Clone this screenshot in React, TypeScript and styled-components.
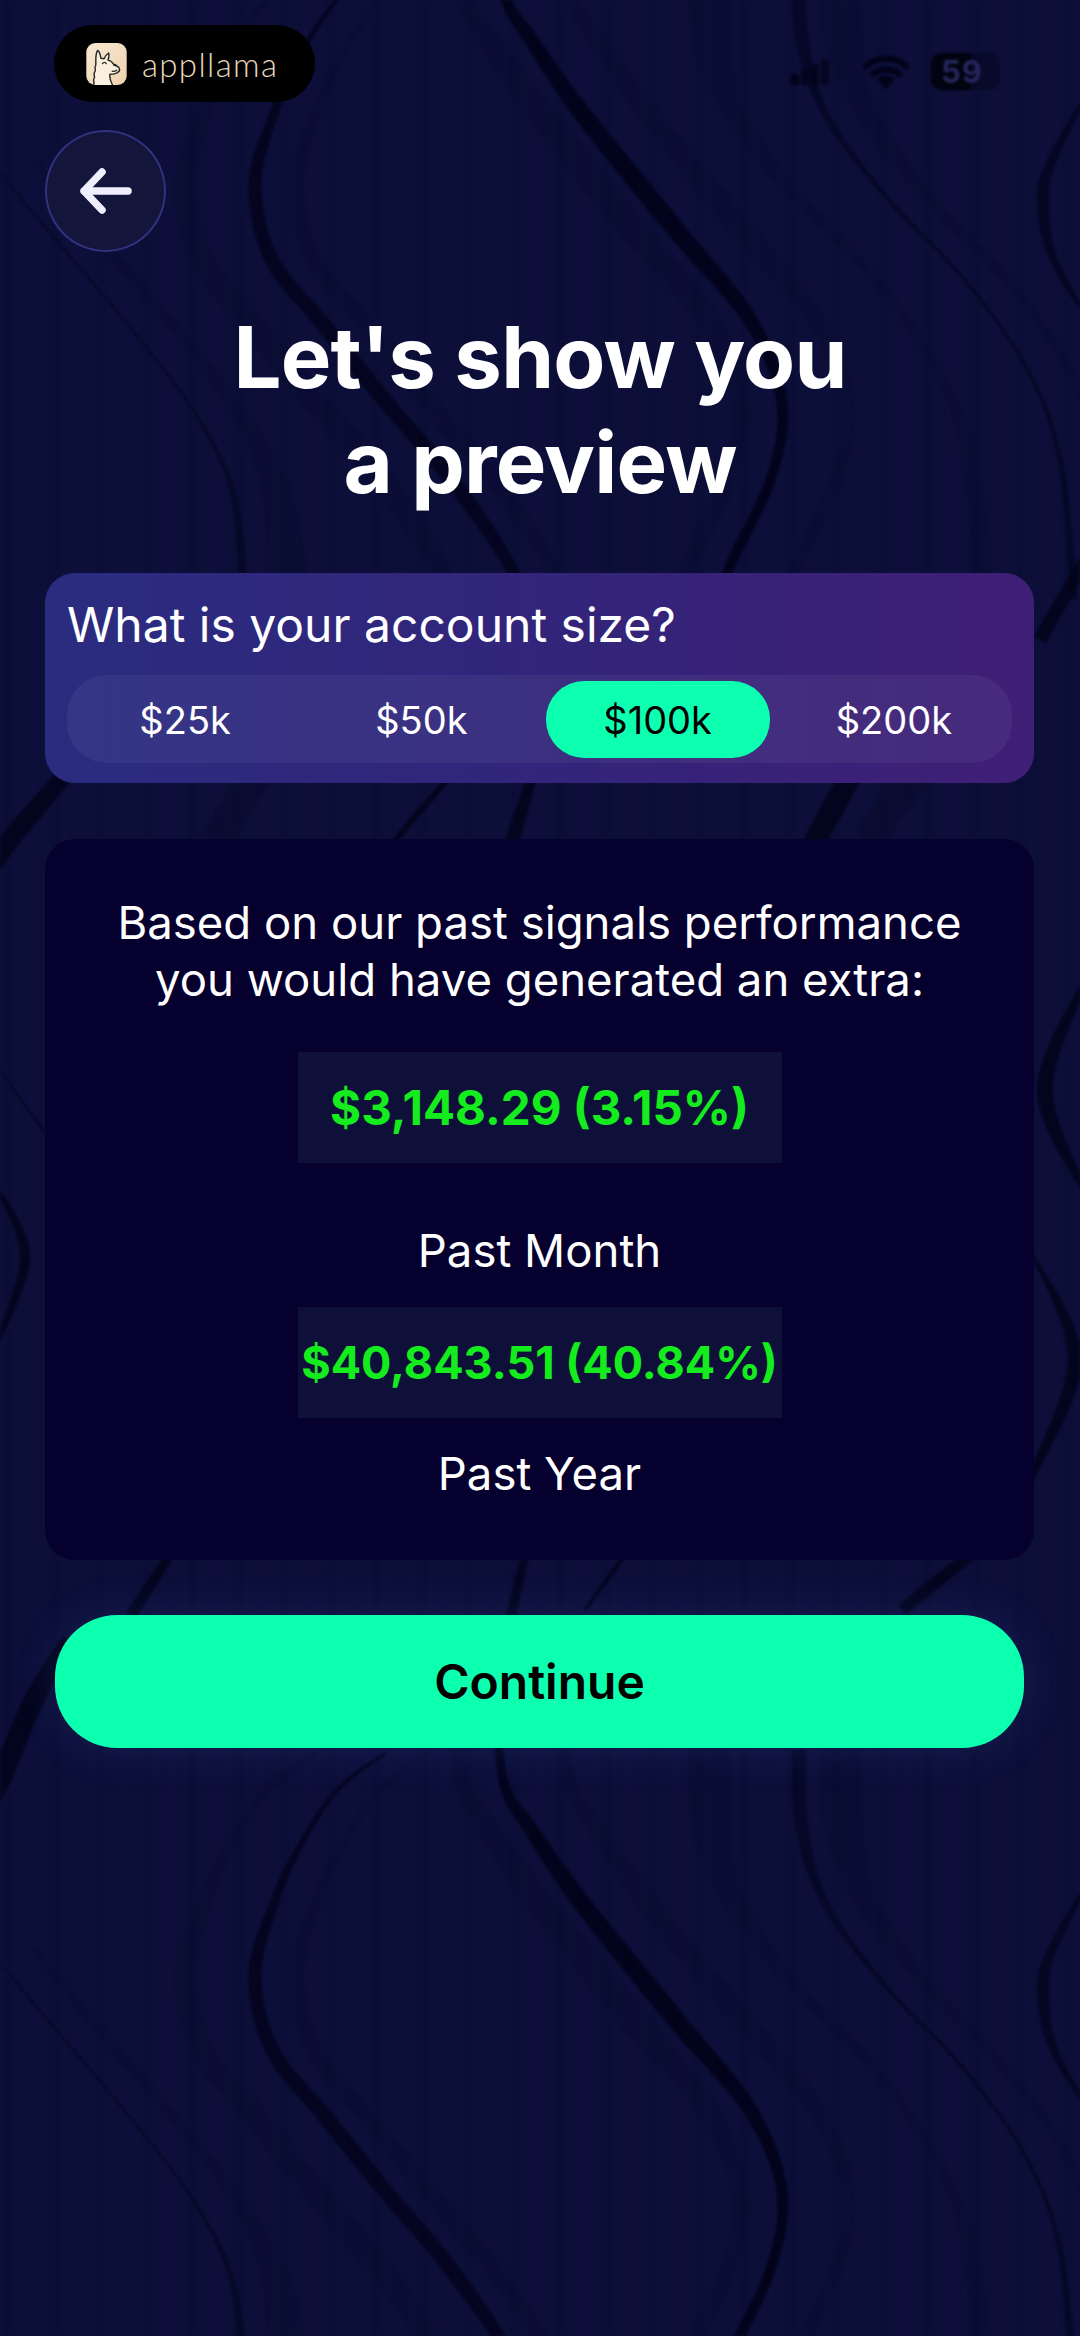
import React, { useState } from 'react';
import styled, { createGlobalStyle } from 'styled-components';

const GlobalStyle = createGlobalStyle`
  html, body {
    margin: 0;
    padding: 0;
    background: #0c0f38;
  }
  * {
    box-sizing: border-box;
  }
`;

const Page = styled.div`
  position: relative;
  width: 1080px;
  height: 2336px;
  overflow: hidden;
  font-family: Inter, 'Liberation Sans', sans-serif;
  color: #fff;
  background-color: #0c0f38;
`;

const Backdrop = styled.svg`
  position: absolute;
  inset: 0;
  width: 1080px;
  height: 2336px;
  filter: blur(1px);
`;

const Content = styled.main`
  position: relative;
  display: flex;
  flex-direction: column;
`;

const StatusBar = styled.header`
  display: flex;
  align-items: flex-start;
  justify-content: space-between;
  height: 77px;
  margin-top: 25px;
  padding: 0 80px 0 54px;
`;

const LogoPill = styled.div`
  display: flex;
  align-items: center;
  gap: 15px;
  width: 261px;
  height: 77px;
  padding: 0 0 0 32px;
  border-radius: 39px;
  background: #000;
`;

const LogoIcon = styled.svg`
  width: 41px;
  height: 42px;
`;

const LogoText = styled.span`
  font-family: Lato, sans-serif;
  font-size: 33px;
  font-weight: 300;
  letter-spacing: 1.35px;
  color: #e9d8bf;
`;

const StatusIcons = styled.div`
  display: flex;
  align-items: center;
  gap: 34px;
  height: 37px;
  margin-top: 28px;
  filter: blur(0.8px);
`;

const Battery = styled.div`
  width: 69px;
  height: 37px;
  margin-left: -12px;
  padding-left: 10px;
  border-radius: 11px;
  overflow: hidden;
  background: linear-gradient(90deg, #020310 0 58%, rgba(3, 4, 22, 0.4) 58% 100%);
  font-size: 31px;
  font-weight: 700;
  line-height: 37px;
  letter-spacing: 1px;
  color: #23265a;
`;

const BackButton = styled.button`
  display: flex;
  align-items: center;
  justify-content: center;
  width: 121px;
  height: 122px;
  margin: 28px 0 0 45px;
  padding: 0;
  border: 2px solid #30327f;
  border-radius: 50%;
  background: #14153a;
`;

const Title = styled.h1`
  margin: 53px 0 0;
  font-size: 85px;
  font-weight: 700;
  line-height: 105px;
  text-align: center;
  letter-spacing: -0.8px;
`;

const SizeCard = styled.section`
  height: 210px;
  margin: 58px 46px 0 45px;
  padding: 22px 22px 0 22px;
  border-radius: 30px;
  background: linear-gradient(90deg, #2a2c80 0%, #33247a 55%, #3f1f75 100%);
`;

const SizeLabel = styled.div`
  font-size: 48px;
  font-weight: 400;
  line-height: 60px;
`;

const SizeTrack = styled.div`
  display: grid;
  grid-template-columns: repeat(4, 1fr);
  height: 88px;
  margin-top: 20px;
  padding: 6px 0 5px;
  border-radius: 40px;
  background: rgba(255, 255, 255, 0.05);
`;

const SizeOption = styled.button<{ $active: boolean }>`
  margin: 0 6px;
  padding: 0;
  border: 0;
  border-radius: 38px;
  font-family: inherit;
  font-size: 38px;
  font-weight: 400;
  color: ${({ $active }) => ($active ? '#000' : '#fff')};
  background: ${({ $active }) => ($active ? '#0dffb0' : 'transparent')};
`;

const ResultCard = styled.section`
  display: flex;
  flex-direction: column;
  align-items: center;
  height: 721px;
  margin: 56px 46px 0 45px;
  padding-top: 55px;
  border-radius: 30px;
  background: #05002e;
`;

const Intro = styled.p`
  margin: 0;
  font-size: 45.5px;
  font-weight: 400;
  line-height: 57px;
  text-align: center;
`;

const ValueBox = styled.div<{ $top: number; $size: number }>`
  display: flex;
  align-items: center;
  justify-content: center;
  width: 484px;
  height: 111px;
  margin-top: ${({ $top }) => $top}px;
  background: #0f1039;
  font-size: ${({ $size }) => $size}px;
  font-weight: 700;
  white-space: nowrap;
  color: #14ec1e;
`;

const PeriodLabel = styled.div`
  font-size: 45.5px;
  font-weight: 400;
  line-height: 56px;
`;

const MonthLabel = styled(PeriodLabel)`
  margin-top: 60px;
`;

const YearLabel = styled(PeriodLabel)`
  margin-top: 28px;
`;

const ContinueButton = styled.button`
  width: 969px;
  height: 133px;
  margin: 55px 0 0 55px;
  padding: 0;
  border: 0;
  border-radius: 62px;
  background: #0dffb0;
  box-shadow: 0 0 46px rgba(90, 130, 255, 0.14);
  font-family: inherit;
  font-size: 48px;
  font-weight: 600;
  color: #000;
`;

type Pt = [number, number, number];

// closed outline around a centre line, width varies per point
const ribbon = (pts: Pt[]): string => {
  const side = (sign: number) =>
    pts.map(([x, y, w], i) => {
      const [ax, ay] = pts[Math.max(i - 1, 0)];
      const [bx, by] = pts[Math.min(i + 1, pts.length - 1)];
      const len = Math.hypot(bx - ax, by - ay) || 1;
      return [x + (sign * w * (by - ay)) / len / 2, y - (sign * w * (bx - ax)) / len / 2];
    });
  const curve = (p: number[][]) =>
    p
      .slice(1)
      .map((c, i) => {
        const p0 = p[Math.max(i - 1, 0)];
        const p1 = p[i];
        const p3 = p[Math.min(i + 2, p.length - 1)];
        return `C${p1[0] + (c[0] - p0[0]) / 6} ${p1[1] + (c[1] - p0[1]) / 6} ${c[0] - (p3[0] - p1[0]) / 6} ${c[1] - (p3[1] - p1[1]) / 6} ${c[0]} ${c[1]}`;
      })
      .join('');
  const left = side(1);
  const right = side(-1).reverse();
  return `M${left[0][0]} ${left[0][1]}${curve(left)}L${right[0][0]} ${right[0][1]}${curve(right)}Z`;
};

const shift = (pts: Pt[], dx: number, scale: number): Pt[] =>
  pts.map(([x, y, w]) => [x + dx, y, w * scale]);

const waveA: Pt[] = [[498, -50, 8], [506, 0, 10], [530, 38, 14], [572, 100, 17], [620, 161, 18], [682, 237, 18], [751, 321, 14], [782, 402, 11], [771, 478, 10], [730, 566, 10], [700, 640, 6]];
const waveB: Pt[] = [[386, -37, 3], [337, 0, 4], [300, 56, 6], [275, 111, 9], [255, 184, 13], [272, 260, 14], [324, 325, 15], [386, 402, 15], [447, 474, 15], [510, 566, 12], [535, 640, 8]];
const waveC: Pt[] = [[799, -40, 14], [802, 38, 13], [826, 115, 7], [888, 199, 4], [964, 279, 3], [1026, 367, 3], [1060, 459, 5], [1074, 600, 8]];
const waveD: Pt[] = [[-10, 160, 1], [41, 222, 2], [138, 337, 2], [200, 421, 3], [234, 497, 6], [244, 600, 9]];
const waveE: Pt[] = [[1095, 80, 2], [1052, 160, 9], [1043, 202, 12], [1054, 260, 8], [1095, 330, 2]];

// repeats down the page every 1790px
const tiled = [
  { d: ribbon(waveA), opacity: 0.95 },
  { d: ribbon(waveB), opacity: 0.8 },
  { d: ribbon(waveC), opacity: 0.6 },
  { d: ribbon(waveD), opacity: 0.55 },
  { d: ribbon(waveE), opacity: 0.7 },
];
const tiledFaint = [
  shift(waveA, -42, 1.5),
  shift(waveA, 66, 1.2),
  shift(waveB, 42, 1.1),
  shift(waveB, -70, 1.6),
  shift(waveC, 42, 3),
  shift(waveC, -90, 3),
  shift(waveD, 44, 5),
].map(ribbon);

// only show once, in the gaps between the cards
const once: Pt[][] = [
  [[70, 770, 15], [60, 781, 17], [10, 840, 19], [-14, 880, 14]],
  [[452, 770, 4], [444, 783, 6], [396, 840, 6], [370, 880, 3]],
  [[533, 770, 9], [530, 783, 10], [513, 840, 14], [505, 880, 10]],
  [[855, 770, 18], [847, 783, 22], [816, 840, 22], [800, 880, 16]],
  [[0, 1070, 1], [43, 1130, 2], [60, 1150, 1]],
  [[-8, 1180, 4], [25, 1256, 10], [-8, 1355, 4]],
  [[1088, 975, 6], [1045, 1090, 16], [1088, 1197, 6]],
  [[1030, 1250, 2], [1075, 1359, 14], [1030, 1480, 8]],
  [[170, 1555, 9], [131, 1615, 12]],
  [[625, 1555, 4], [585, 1610, 4]],
  [[525, 1555, 8], [510, 1620, 10]],
  [[970, 1555, 12], [902, 1610, 12]],
  [[70, 1640, 16], [34, 1700, 20], [0, 1781, 20], [-14, 1812, 12]],
  [[1085, 560, 12], [1040, 640, 14]],
];
const onceFaint: Pt[][] = [
  [[925, 770, 28], [909, 783, 30], [868, 840, 30]],
  [[260, 770, 30], [215, 840, 30]],
];

const Waves: React.FC = () => (
  <Backdrop viewBox="0 0 1080 2336" aria-hidden="true">
    <defs>
      <pattern id="grain" width="46" height="40" patternUnits="userSpaceOnUse">
        <rect x="4" width="9" height="40" fill="#05062a" opacity="0.07" />
        <rect x="25" width="14" height="40" fill="#1a1050" opacity="0.08" />
      </pattern>
    </defs>
    <rect width="1080" height="2336" fill="url(#grain)" />
    {[0, 1790].map((y) => (
      <g key={y} transform={`translate(0 ${y})`}>
        {tiledFaint.map((d) => (
          <path key={d} d={d} fill="#03051f" opacity="0.16" />
        ))}
        {tiled.map(({ d, opacity }) => (
          <path key={d} d={d} fill="#02031a" opacity={opacity} />
        ))}
      </g>
    ))}
    {onceFaint.map((pts) => (
      <path key={pts[0][1] + pts[0][0]} d={ribbon(pts)} fill="#03051f" opacity="0.25" />
    ))}
    {once.map((pts) => (
      <path key={pts[0][1] + pts[0][0]} d={ribbon(pts)} fill="#02031a" opacity="0.85" />
    ))}
  </Backdrop>
);

const Llama: React.FC = () => (
  <LogoIcon viewBox="0 0 125 130" aria-hidden="true">
    <defs>
      <linearGradient id="llamaBg" x1="0" y1="0" x2="1" y2="1">
        <stop offset="0" stopColor="#f8e8d2" />
        <stop offset="1" stopColor="#eed3b0" />
      </linearGradient>
    </defs>
    <rect width="125" height="130" rx="28" fill="url(#llamaBg)" />
    <path
      d="M22 130c6-8-3-12 2-20s-4-12 2-20-3-12 3-20c2-12-3-32 6-47 7 2 8 14 10 24l10 2c3-8 8-14 14-18 3 8 0 16-2 22 12 2 16 10 20 16 8 2 16 6 16 14s-14 14-30 14c-2 12 2 22 8 33"
      fill="#fbf0e0"
      stroke="#2b2a2a"
      strokeWidth="4.5"
      strokeLinecap="round"
      strokeLinejoin="round"
    />
    <path
      d="M50 64c3-5 9-5 12 0M84 68c3-2 6-2 8 0M94 84c-5 4-10 4-14 3"
      fill="none"
      stroke="#2b2a2a"
      strokeWidth="4"
      strokeLinecap="round"
    />
  </LogoIcon>
);

const SignalIcon: React.FC = () => (
  <svg width="38" height="26" viewBox="0 0 38 26" aria-hidden="true">
    <rect x="0" y="15" width="8" height="11" rx="2.5" fill="#02031a" />
    <rect x="10" y="10" width="8" height="16" rx="2.5" fill="#02031a" opacity="0.85" />
    <rect x="20" y="5" width="8" height="21" rx="2.5" fill="#02031a" opacity="0.8" />
    <rect x="30" y="0" width="8" height="26" rx="2.5" fill="#02031a" opacity="0.7" />
  </svg>
);

const WifiIcon: React.FC = () => (
  <svg width="46" height="34" viewBox="0 0 46 34" aria-hidden="true">
    <path
      d="M3 11c11-10 29-10 40 0M10 19c7-6 19-6 26 0"
      fill="none"
      stroke="#02031a"
      strokeWidth="6"
      strokeLinecap="round"
    />
    <path d="M14 24c5-4 13-4 18 0l-9 10z" fill="#02031a" />
  </svg>
);

const ArrowIcon: React.FC = () => (
  <svg width="60" height="52" viewBox="0 0 60 52" aria-hidden="true">
    <path
      d="M52 26H8M26 7L8 26l18 19"
      fill="none"
      stroke="#eeeeff"
      strokeWidth="7.5"
      strokeLinecap="round"
      strokeLinejoin="round"
    />
  </svg>
);

const sizes = ['$25k', '$50k', '$100k', '$200k'];

const App: React.FC = () => {
  const [size, setSize] = useState('$100k');

  return (
    <Page>
      <GlobalStyle />
      <Waves />
      <Content>
        <StatusBar>
          <LogoPill>
            <Llama />
            <LogoText>appllama</LogoText>
          </LogoPill>
          <StatusIcons>
            <SignalIcon />
            <WifiIcon />
            <Battery>59</Battery>
          </StatusIcons>
        </StatusBar>
        <BackButton aria-label="Back">
          <ArrowIcon />
        </BackButton>
        <Title>
          Let's show you
          <br />a preview
        </Title>
        <SizeCard>
          <SizeLabel>What is your account size?</SizeLabel>
          <SizeTrack>
            {sizes.map((s) => (
              <SizeOption key={s} $active={s === size} onClick={() => setSize(s)}>
                {s}
              </SizeOption>
            ))}
          </SizeTrack>
        </SizeCard>
        <ResultCard>
          <Intro>
            Based on our past signals performance
            <br />
            you would have generated an extra:
          </Intro>
          <ValueBox $top={44} $size={47.5}>
            $3,148.29 (3.15%)
          </ValueBox>
          <MonthLabel>Past Month</MonthLabel>
          <ValueBox $top={28} $size={45}>
            $40,843.51 (40.84%)
          </ValueBox>
          <YearLabel>Past Year</YearLabel>
        </ResultCard>
        <ContinueButton>Continue</ContinueButton>
      </Content>
    </Page>
  );
};

export default App;
